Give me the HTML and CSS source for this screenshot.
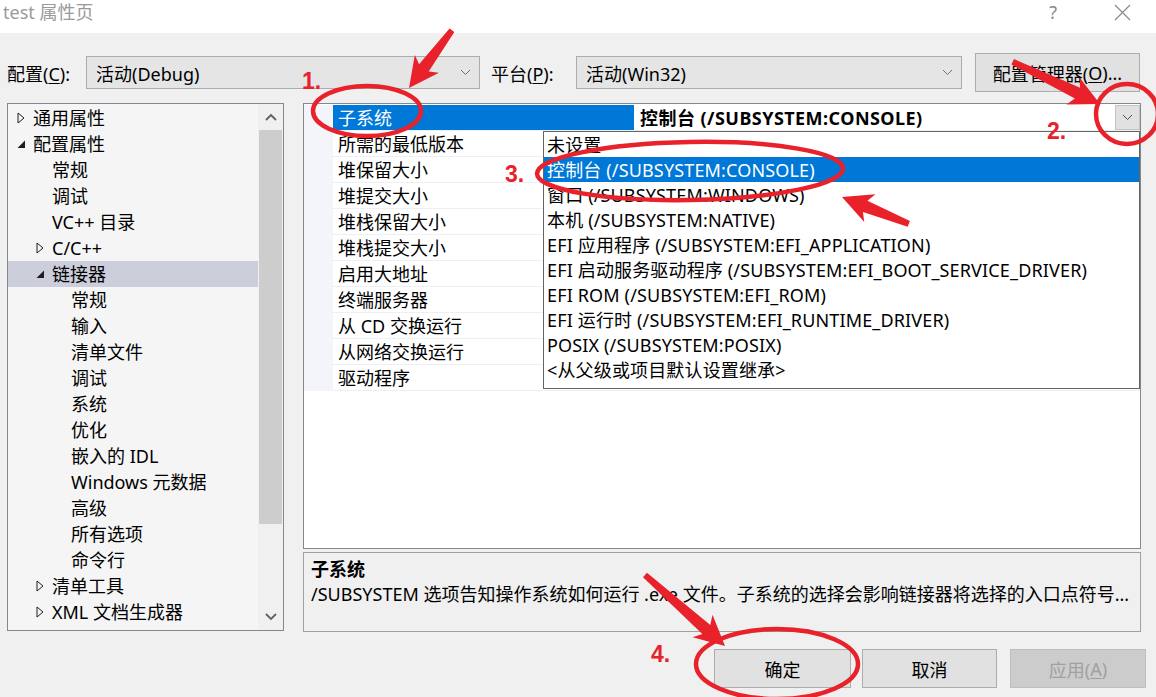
FILE: index.html
```html
<!DOCTYPE html>
<html lang="zh-CN">
<head>
    <meta charset="UTF-8">
    <title>test 属性页</title>
    <link rel="stylesheet" href="styles.css">
</head>
<body>
    <div class="titlebar">
        <span class="title">test 属性页</span>
        <span class="help">?</span>
        <svg class="close" width="17" height="17" viewBox="0 0 17 17"><path d="M1 1 L16 16 M16 1 L1 16" stroke="#8a8a8a" stroke-width="1.2" fill="none"/></svg>
    </div>

    <div class="toprow">
        <span class="lbl lbl-cfg">配置(<u>C</u>):</span>
        <div class="combo combo-cfg">
            <span>活动(Debug)</span>
            <svg width="11" height="7" viewBox="0 0 11 7"><path d="M1 1 L5.5 5.5 L10 1" stroke="#707070" stroke-width="1" fill="none"/></svg>
        </div>
        <span class="lbl lbl-plat">平台(<u>P</u>):</span>
        <div class="combo combo-plat">
            <span>活动(Win32)</span>
            <svg width="11" height="7" viewBox="0 0 11 7"><path d="M1 1 L5.5 5.5 L10 1" stroke="#707070" stroke-width="1" fill="none"/></svg>
        </div>
        <div class="btn btn-mgr">配置管理器(<u>O</u>)...</div>
    </div>

    <div class="main">
        <div class="tree">
            <div class="nodes">
                <div class="node l0"><span class="exp"><svg width="8" height="12" viewBox="0 0 8 12"><path d="M1 1 L7 6 L1 11 Z" stroke="#1e1e1e" fill="none"/></svg></span>通用属性</div>
                <div class="node l0"><span class="exp"><svg width="9" height="9" viewBox="0 0 9 9"><path d="M8 0.5 L8 8 L0.5 8 Z" fill="#1e1e1e"/></svg></span>配置属性</div>
                <div class="node l1"><span class="exp"></span>常规</div>
                <div class="node l1"><span class="exp"></span>调试</div>
                <div class="node l1"><span class="exp"></span>VC++ 目录</div>
                <div class="node l1"><span class="exp"><svg width="8" height="12" viewBox="0 0 8 12"><path d="M1 1 L7 6 L1 11 Z" stroke="#1e1e1e" fill="none"/></svg></span>C/C++</div>
                <div class="node l1 current"><span class="exp"><svg width="9" height="9" viewBox="0 0 9 9"><path d="M8 0.5 L8 8 L0.5 8 Z" fill="#1e1e1e"/></svg></span>链接器</div>
                <div class="node l2"><span class="exp"></span>常规</div>
                <div class="node l2"><span class="exp"></span>输入</div>
                <div class="node l2"><span class="exp"></span>清单文件</div>
                <div class="node l2"><span class="exp"></span>调试</div>
                <div class="node l2"><span class="exp"></span>系统</div>
                <div class="node l2"><span class="exp"></span>优化</div>
                <div class="node l2"><span class="exp"></span>嵌入的 IDL</div>
                <div class="node l2"><span class="exp"></span>Windows 元数据</div>
                <div class="node l2"><span class="exp"></span>高级</div>
                <div class="node l2"><span class="exp"></span>所有选项</div>
                <div class="node l2"><span class="exp"></span>命令行</div>
                <div class="node l1"><span class="exp"><svg width="8" height="12" viewBox="0 0 8 12"><path d="M1 1 L7 6 L1 11 Z" stroke="#1e1e1e" fill="none"/></svg></span>清单工具</div>
                <div class="node l1"><span class="exp"><svg width="8" height="12" viewBox="0 0 8 12"><path d="M1 1 L7 6 L1 11 Z" stroke="#1e1e1e" fill="none"/></svg></span>XML 文档生成器</div>
            </div>
            <div class="vscroll">
                <div class="sarrow"><svg width="12" height="8" viewBox="0 0 12 8"><path d="M1 7 L6 2 L11 7" stroke="#606060" stroke-width="1.8" fill="none"/></svg></div>
                <div class="thumb"></div>
                <div class="track"></div>
                <div class="sarrow"><svg width="12" height="8" viewBox="0 0 12 8"><path d="M1 1 L6 6 L11 1" stroke="#606060" stroke-width="1.8" fill="none"/></svg></div>
            </div>
        </div>

        <div class="rightcol">
            <div class="grid">
                <div class="rows">
                    <div class="row sel">
                        <span class="gutter"></span>
                        <span class="name">子系统</span>
                        <span class="value"><span class="val-text">控制台 (/SUBSYSTEM:CONSOLE)</span>
                            <span class="dropbtn"><svg width="11" height="7" viewBox="0 0 11 7"><path d="M1 1 L5.5 5.5 L10 1" stroke="#505050" stroke-width="1" fill="none"/></svg></span>
                        </span>
                    </div>
                    <div class="row"><span class="gutter"></span><span class="name">所需的最低版本</span><span class="value"></span></div>
                    <div class="row"><span class="gutter"></span><span class="name">堆保留大小</span><span class="value"></span></div>
                    <div class="row"><span class="gutter"></span><span class="name">堆提交大小</span><span class="value"></span></div>
                    <div class="row"><span class="gutter"></span><span class="name">堆栈保留大小</span><span class="value"></span></div>
                    <div class="row"><span class="gutter"></span><span class="name">堆栈提交大小</span><span class="value"></span></div>
                    <div class="row"><span class="gutter"></span><span class="name">启用大地址</span><span class="value"></span></div>
                    <div class="row"><span class="gutter"></span><span class="name">终端服务器</span><span class="value"></span></div>
                    <div class="row"><span class="gutter"></span><span class="name">从 CD 交换运行</span><span class="value"></span></div>
                    <div class="row"><span class="gutter"></span><span class="name">从网络交换运行</span><span class="value"></span></div>
                    <div class="row"><span class="gutter"></span><span class="name">驱动程序</span><span class="value"></span></div>
                </div>

                <div class="droplist">
                    <div class="opt">未设置</div>
                    <div class="opt picked">控制台 (/SUBSYSTEM:CONSOLE)</div>
                    <div class="opt">窗口 (/SUBSYSTEM:WINDOWS)</div>
                    <div class="opt">本机 (/SUBSYSTEM:NATIVE)</div>
                    <div class="opt">EFI 应用程序 (/SUBSYSTEM:EFI_APPLICATION)</div>
                    <div class="opt">EFI 启动服务驱动程序 (/SUBSYSTEM:EFI_BOOT_SERVICE_DRIVER)</div>
                    <div class="opt">EFI ROM (/SUBSYSTEM:EFI_ROM)</div>
                    <div class="opt">EFI 运行时 (/SUBSYSTEM:EFI_RUNTIME_DRIVER)</div>
                    <div class="opt">POSIX (/SUBSYSTEM:POSIX)</div>
                    <div class="opt">&lt;从父级或项目默认设置继承&gt;</div>
                </div>
            </div>

            <div class="desc">
                <div class="desc-title">子系统</div>
                <div class="desc-text">/SUBSYSTEM 选项告知操作系统如何运行 .exe 文件。子系统的选择会影响链接器将选择的入口点符号...</div>
            </div>
        </div>
    </div>

    <div class="buttons">
        <div class="btn btn-ok">确定</div>
        <div class="btn btn-cancel">取消</div>
        <div class="btn btn-apply disabled">应用(<u>A</u>)</div>
    </div>

    <!-- red annotation marks drawn over the dialog -->
    <svg class="marks" width="1156" height="697" viewBox="0 0 1156 697">
        <g fill="none" stroke="#e8212b" stroke-width="4.5">
            <ellipse cx="367" cy="111" rx="54" ry="25"/>
            <ellipse cx="1127" cy="114" rx="31" ry="30"/>
            <ellipse cx="690" cy="171" rx="153" ry="29" transform="rotate(-1 690 171)"/>
            <ellipse cx="777" cy="664" rx="81" ry="35"/>
        </g>
        <g fill="#e8212b">
            <polygon transform="translate(409 88) rotate(126.6)" points="0,0 -30,-15 -25,-6 -72,-3 -72,3 -25,6 -30,15"/>
            <polygon transform="translate(1100 104) rotate(25.8)" points="0,0 -30,-15 -25,-6 -97,-3 -97,3 -25,6 -30,15"/>
            <polygon transform="translate(842 197) rotate(201.9)" points="0,0 -30,-15 -25,-6 -72,-3 -72,3 -25,6 -30,15"/>
            <polygon transform="translate(725 646) rotate(41.6)" points="0,0 -30,-15 -25,-6 -107,-3 -107,3 -25,6 -30,15"/>
        </g>
        <g class="num">
            <text x="302" y="89">1.</text>
            <text x="1047" y="139">2.</text>
            <text x="505" y="182">3.</text>
            <text x="651" y="662">4.</text>
        </g>
    </svg>
</body>
</html>
```

FILE: styles.css
```css
* {
    box-sizing: border-box;
}
body {
    margin: 0;
    width: 1156px;
    height: 697px;
    overflow: hidden;
    position: relative;
    background: #f0f0f0;
    font-family: "Noto Sans", "Noto Sans CJK SC", sans-serif;
    font-size: 18px;
    color: #000;
}
u {
    text-decoration: underline;
    text-underline-offset: 2px;
}

.titlebar {
    height: 33px;
    background: #fff;
    display: flex;
    align-items: center;
    padding-left: 3px;
}
.title {
    flex: 1;
    color: #9a9a9a;
    font-size: 18px;
    margin-top: -11px;
}
.help {
    color: #8a8a8a;
    font-size: 18px;
    margin-right: 57px;
    margin-top: -10px;
}
.close {
    margin-right: 25px;
    margin-top: -8px;
}

.toprow {
    display: flex;
    align-items: center;
    height: 39px;
    margin-top: 20px;
    padding-left: 7px;
}
.lbl {
    white-space: nowrap;
}
.lbl-cfg {
    width: 79px;
}
.lbl-plat {
    width: 85px;
    margin-left: 11px;
}
.combo {
    height: 33px;
    display: flex;
    align-items: center;
    justify-content: space-between;
    background: #e5e5e5;
    border: 1px solid #acacac;
    padding: 0 8px 0 9px;
}
.combo-cfg {
    width: 394px;
}
.combo-plat {
    width: 386px;
}
.btn {
    display: flex;
    align-items: center;
    justify-content: center;
    height: 39px;
    background: #e1e1e1;
    border: 1px solid #adadad;
    white-space: nowrap;
}
.btn-mgr {
    width: 165px;
    margin-left: 13px;
}

.main {
    display: flex;
    margin-top: 11px;
    padding-left: 7px;
}
.tree {
    width: 277px;
    height: 528px;
    border: 1px solid #828790;
    background: #f5f5f5;
    display: flex;
}
.nodes {
    flex: 1;
    padding-top: 1px;
}
.node {
    height: 26px;
    line-height: 26px;
    display: flex;
    align-items: center;
    white-space: nowrap;
}
.node.l0 {
    padding-left: 9px;
}
.node.l1 {
    padding-left: 28px;
}
.node.l2 {
    padding-left: 47px;
}
.node.current {
    background: #cccedb;
}
.exp {
    width: 16px;
    flex: none;
    display: flex;
    align-items: center;
}
.vscroll {
    width: 25px;
    display: flex;
    flex-direction: column;
    background: #f0f0f0;
}
.sarrow {
    height: 26px;
    display: flex;
    align-items: center;
    justify-content: center;
}
.thumb {
    height: 394px;
    margin: 0 1px;
    background: #cdcdcd;
}
.track {
    flex: 1;
}

.rightcol {
    width: 838px;
    margin-left: 19px;
}
.grid {
    position: relative;
    height: 446px;
    border: 1px solid #828790;
    background: #fff;
}
.rows {
    padding-top: 1px;
}
.row {
    display: flex;
    height: 26px;
    line-height: 26px;
}
.gutter {
    width: 29px;
    background: #f3f5fa;
}
.name {
    width: 301px;
    padding-left: 5px;
    border-bottom: 1px solid #eeeff2;
    white-space: nowrap;
}
.value {
    flex: 1;
    display: flex;
    align-items: center;
    padding-left: 6px;
    border-bottom: 1px solid #eeeff2;
    white-space: nowrap;
}
.row.sel .name {
    background: #0078d7;
    color: #fff;
}
.val-text {
    font-weight: bold;
    letter-spacing: 0.45px;
}
.dropbtn {
    margin-left: auto;
    width: 25px;
    height: 25px;
    background: #e1e1e1;
    border: 1px solid #c4c4c4;
    display: flex;
    align-items: center;
    justify-content: center;
}

.droplist {
    position: absolute;
    left: 239px;
    right: 0;
    top: 27px;
    height: 258px;
    background: #fff;
    border: 1px solid #646464;
}
.opt {
    height: 25px;
    line-height: 26px;
    padding-left: 3px;
    white-space: nowrap;
    letter-spacing: 0.15px;
}
.opt.picked {
    background: #0078d7;
    color: #fff;
}

.desc {
    height: 80px;
    margin-top: 3px;
    border: 1px solid #a0a0a0;
    background: #f0f0f0;
    padding: 4px 7px;
}
.desc-title {
    font-weight: bold;
    line-height: 25px;
}
.desc-text {
    line-height: 25px;
    white-space: nowrap;
    overflow: hidden;
}

.buttons {
    display: flex;
    justify-content: flex-end;
    margin-top: 17px;
    padding-right: 10px;
}
.btn-ok {
    width: 137px;
}
.btn-cancel {
    width: 135px;
    margin-left: 11px;
}
.btn-apply {
    width: 136px;
    margin-left: 13px;
}
.btn.disabled {
    background: #cccccc;
    border-color: #bfbfbf;
    color: #a0a0a0;
}

.marks {
    position: absolute;
    left: 0;
    top: 0;
    pointer-events: none;
}
.num text {
    fill: #e8212b;
    font-family: "Liberation Sans", Arial, sans-serif;
    font-weight: bold;
    font-size: 23px;
}
```
